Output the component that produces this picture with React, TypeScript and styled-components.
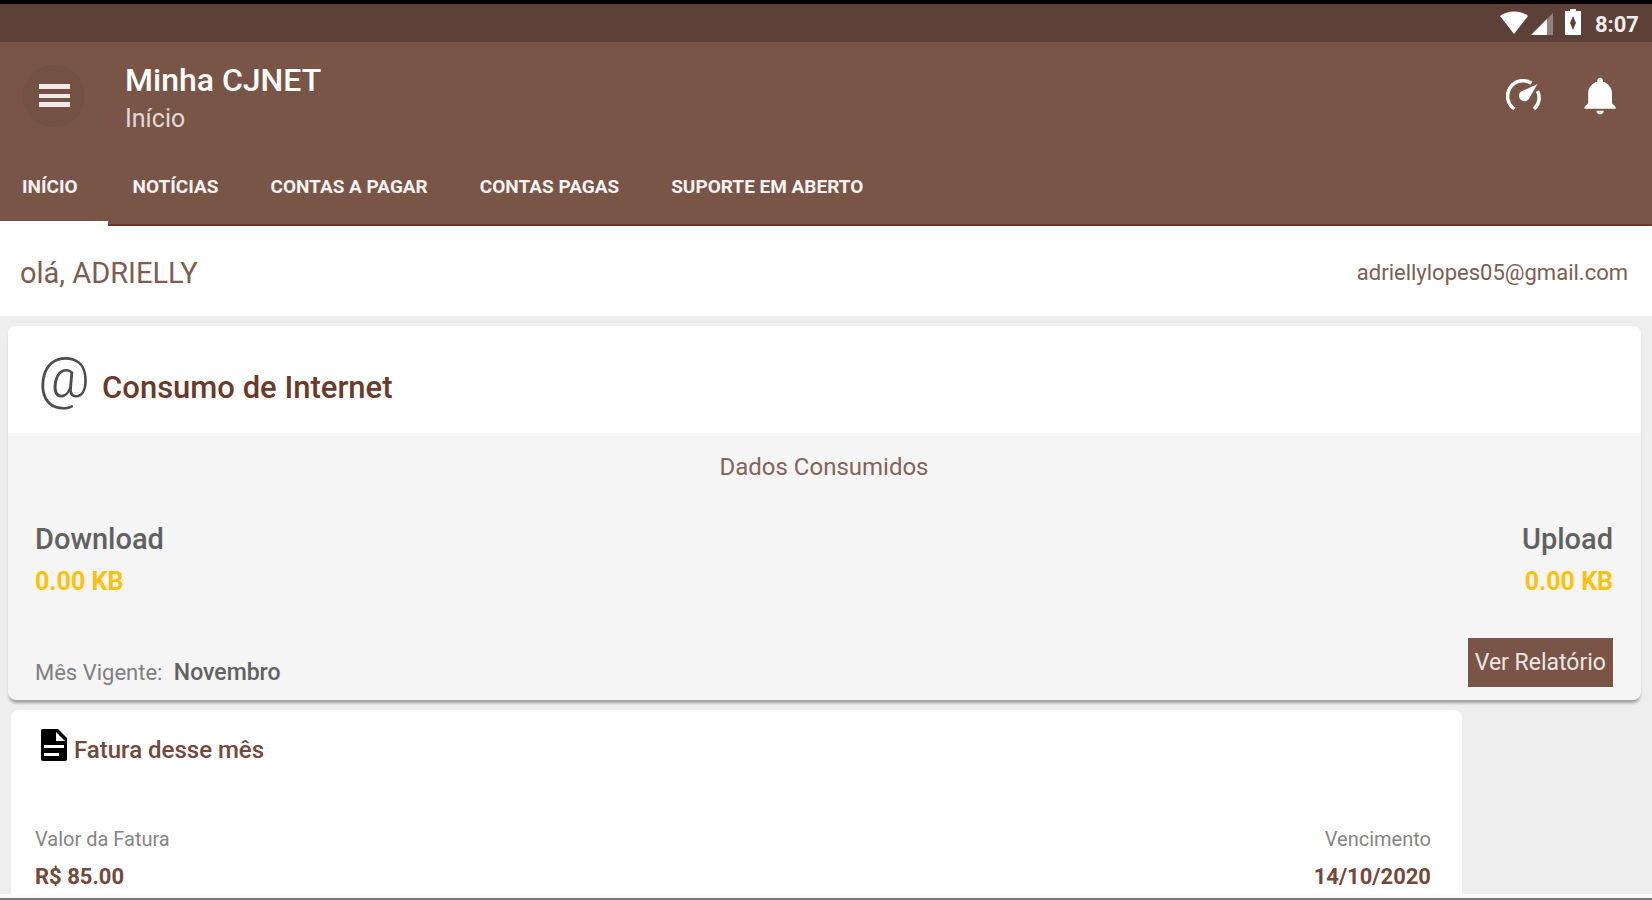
import React from 'react';
import styled, { createGlobalStyle } from 'styled-components';

const GlobalStyle = createGlobalStyle`
  *, *::before, *::after { box-sizing: border-box; }
  body { margin: 0; font-family: Roboto, "Liberation Sans", sans-serif; background: #eeeeee; }
  button { font: inherit; border: 0; padding: 0; background: none; cursor: pointer; }
  h1, h2, p, dl, dt, dd { margin: 0; }
`;

const Screen = styled.div`
  display: flex;
  flex-direction: column;
  height: 100vh;
  border-top: 4px solid #000;
  border-bottom: 2px solid #777777;
  overflow: hidden;
`;

const StatusBar = styled.div`
  display: flex;
  flex: none;
  align-items: center;
  justify-content: flex-end;
  height: 38px;
  padding: 0 13px 0 0;
  background: #5d4037;
  color: #f3eeec;
  font-size: 22px;
  font-weight: 700;
  line-height: 26px;
`;

const StatusIcons = styled.svg`
  margin-right: 12px;
`;

const Clock = styled.time`
  padding-top: 4px;
`;

const AppBar = styled.header`
  flex: none;
  background: #795548;
  color: #fff;
  border-bottom: 2px solid #6b3a24;
`;

const Toolbar = styled.div`
  display: flex;
  align-items: center;
  height: 108px;
  padding: 0 29px 0 23px;
`;

const MenuButton = styled.button`
  display: grid;
  place-items: center;
  width: 62px;
  height: 62px;
  border-radius: 50%;
  background: #745145;
  color: #f0ebe9;
`;

const Heading = styled.div`
  flex: 1;
  padding: 6px 0 0 40px;
`;

const Title = styled.h1`
  font-size: 32px;
  font-weight: 500;
  line-height: 40px;
`;

const Subtitle = styled.p`
  color: #e2dad7;
  font-size: 25px;
  line-height: 38px;
`;

const ActionButton = styled.button`
  display: grid;
  place-items: center;
  width: 44px;
  height: 44px;
  margin-left: 33px;
  color: #fff;
`;

const Tabs = styled.nav`
  display: flex;
  height: 74px;
`;

const Tab = styled.button<{ $active?: boolean }>`
  height: 76px;
  padding: 3px 27px 0 25px;
  border-bottom: 5px solid ${(p) => (p.$active ? '#fff' : 'transparent')};
  color: #f8f4f2;
  font-size: 19px;
  font-weight: 700;
  line-height: 24px;

  &:first-child {
    padding-left: 22px;
    padding-right: 30px;
  }
`;

const Greeting = styled.section`
  display: flex;
  flex: none;
  align-items: center;
  justify-content: space-between;
  height: 90px;
  padding: 3px 24px 0 20px;
  background: #fff;
  color: #7d5d51;
`;

const UserName = styled.span`
  font-size: 29px;
  line-height: 36px;
`;

const Email = styled.a`
  color: inherit;
  font-size: 22px;
  line-height: 28px;
  text-decoration: none;
`;

const Content = styled.main`
  display: flex;
  flex: 1;
  flex-direction: column;
  gap: 10px;
  min-height: 0;
  padding: 10px 11px 0 8px;
  border-bottom: 4px solid #fcfcfc;
  overflow: hidden;
`;

const UsageCard = styled.section`
  flex: none;
  border-radius: 8px;
  background: #f5f5f5;
  box-shadow: 0 4px 3px -1px rgba(0, 0, 0, 0.32);
`;

const UsageHeader = styled.div`
  display: flex;
  align-items: flex-start;
  gap: 12px;
  height: 107px;
  padding: 20px 30px 0;
  border-radius: 8px 8px 0 0;
  background: #fff;
`;

const AtSign = styled.span`
  color: #4d4d4d;
  font-size: 57px;
  font-weight: 300;
  line-height: 64px;
`;

const UsageTitle = styled.h2`
  padding-top: 22px;
  color: #6b3a2a;
  font-size: 31px;
  font-weight: 500;
  line-height: 40px;
`;

const UsageBody = styled.div`
  padding: 20px 28px 13px 27px;
`;

const Caption = styled.p`
  color: #836459;
  font-size: 24px;
  line-height: 28px;
  text-align: center;
`;

const Split = styled.dl`
  display: flex;
  justify-content: space-between;
`;

const Measure = styled.div<{ $end?: boolean }>`
  text-align: ${(p) => (p.$end ? 'right' : 'left')};
`;

const UsageSplit = styled(Split)`
  padding-top: 38px;
`;

const UsageLabel = styled.dt`
  color: #616161;
  font-size: 29px;
  font-weight: 500;
  line-height: 40px;
`;

const UsageValue = styled.dd`
  color: #ffc107;
  font-size: 25px;
  font-weight: 700;
  line-height: 46px;
`;

const UsageFooter = styled.div`
  display: flex;
  align-items: flex-end;
  justify-content: space-between;
  padding-top: 33px;
`;

const Period = styled.p`
  color: #808080;
  font-size: 22px;
  line-height: 28px;
`;

const Month = styled.strong`
  margin-left: 6px;
  color: #616161;
  font-size: 23px;
  font-weight: 500;
`;

const ReportButton = styled.button`
  && {
    height: 49px;
    padding: 0 7px;
    background: #795548;
    color: #eee5e1;
    font-size: 23px;
    line-height: 28px;
  }
`;

const InvoiceCard = styled.section`
  flex: none;
  min-height: 240px;
  margin: 0 179px 0 3px;
  padding: 17px 31px 24px 24px;
  border-radius: 8px;
  background: #fff;
`;

const InvoiceHeader = styled.div`
  display: flex;
  align-items: flex-start;
  gap: 6px;
  padding-left: 6px;
`;

const InvoiceTitle = styled.h2`
  padding-top: 9px;
  color: #74483b;
  font-size: 24px;
  font-weight: 500;
  line-height: 28px;
`;

const InvoiceSplit = styled(Split)`
  padding-top: 60px;
`;

const InvoiceLabel = styled.dt`
  color: #858585;
  font-size: 20px;
  line-height: 30px;
`;

const InvoiceValue = styled.dd`
  color: #74483b;
  font-size: 22px;
  font-weight: 700;
  line-height: 46px;
`;

const MenuIcon = () => (
  <svg width="31" height="26" viewBox="0 0 31 26" fill="currentColor" aria-hidden="true">
    <path d="M0 1h31v5H0zM0 11h31v4H0zM0 19h31v5H0z" />
  </svg>
);

const GaugeIcon = () => (
  <svg width="36" height="34" viewBox="0 0 36 34" fill="none" aria-hidden="true">
    <path d="M8.500 30A15 15 0 0 1 25.500 4.300M31.500 12A15 15 0 0 1 28 30" stroke="#fff" strokeWidth="3.500" />
    <path d="M31.500 5 22.500 20.500a5.500 5.500 0 1 1-7.500-8z" fill="#fff" />
  </svg>
);

const BellIcon = () => (
  <svg width="44" height="44" viewBox="0 0 24 24" fill="currentColor" aria-hidden="true">
    <path d="M11.500 22c1.100 0 2-.9 2-2h-4c0 1.100.9 2 2 2zm6.500-6v-5.500c0-3.070-2.130-5.640-5-6.320V3.500c0-.83-.67-1.500-1.500-1.500S10 2.670 10 3.500v.68c-2.870.68-5 3.250-5 6.320V16l-2 2v1h17v-1l-2-2z" />
  </svg>
);

const DocumentIcon = () => (
  <svg width="27" height="36" viewBox="0 0 27 36" aria-hidden="true">
    <path d="M2 2h15l9 9v21a2 2 0 0 1-2 2H2a2 2 0 0 1-2-2V4a2 2 0 0 1 2-2z" fill="#000" />
    <path d="M15 5v9h9zM3 18h20v3H3zM3 26h15v3H3z" fill="#fff" />
  </svg>
);

const TABS = ['INÍCIO', 'NOTÍCIAS', 'CONTAS A PAGAR', 'CONTAS PAGAS', 'SUPORTE EM ABERTO'];

export default function App() {
  return (
    <>
      <GlobalStyle />
      <Screen>
        <StatusBar>
          <StatusIcons width="84" height="30" viewBox="0 0 84 30" fill="#fff" aria-hidden="true">
            <path d="M1 8C8 2 22 2 29 8L15 26z" />
            <path d="M54 5v22H32z" opacity=".35" />
            <path d="M48 11v16H32z" />
            <path fillRule="evenodd" d="M71 1h6v2h5v24H66V3h5zM74 8l-3 7 1 2 2 5 2-5 1-2z" />
          </StatusIcons>
          <Clock>8:07</Clock>
        </StatusBar>
        <AppBar>
          <Toolbar>
            <MenuButton aria-label="Menu">
              <MenuIcon />
            </MenuButton>
            <Heading>
              <Title>Minha CJNET</Title>
              <Subtitle>Início</Subtitle>
            </Heading>
            <ActionButton aria-label="Velocidade">
              <GaugeIcon />
            </ActionButton>
            <ActionButton aria-label="Notificações">
              <BellIcon />
            </ActionButton>
          </Toolbar>
          <Tabs>
            {TABS.map((label, i) => (
              <Tab key={label} $active={i === 0}>
                {label}
              </Tab>
            ))}
          </Tabs>
        </AppBar>
        <Greeting>
          <UserName>olá, ADRIELLY</UserName>
          <Email href="mailto:adriellylopes05@gmail.com">adriellylopes05@gmail.com</Email>
        </Greeting>
        <Content>
          <UsageCard>
            <UsageHeader>
              <AtSign>@</AtSign>
              <UsageTitle>Consumo de Internet</UsageTitle>
            </UsageHeader>
            <UsageBody>
              <Caption>Dados Consumidos</Caption>
              <UsageSplit>
                <Measure>
                  <UsageLabel>Download</UsageLabel>
                  <UsageValue>0.00 KB</UsageValue>
                </Measure>
                <Measure $end>
                  <UsageLabel>Upload</UsageLabel>
                  <UsageValue>0.00 KB</UsageValue>
                </Measure>
              </UsageSplit>
              <UsageFooter>
                <Period>
                  Mês Vigente: <Month>Novembro</Month>
                </Period>
                <ReportButton>Ver Relatório</ReportButton>
              </UsageFooter>
            </UsageBody>
          </UsageCard>
          <InvoiceCard>
            <InvoiceHeader>
              <DocumentIcon />
              <InvoiceTitle>Fatura desse mês</InvoiceTitle>
            </InvoiceHeader>
            <InvoiceSplit>
              <Measure>
                <InvoiceLabel>Valor da Fatura</InvoiceLabel>
                <InvoiceValue>R$ 85.00</InvoiceValue>
              </Measure>
              <Measure $end>
                <InvoiceLabel>Vencimento</InvoiceLabel>
                <InvoiceValue>14/10/2020</InvoiceValue>
              </Measure>
            </InvoiceSplit>
          </InvoiceCard>
        </Content>
      </Screen>
    </>
  );
}
